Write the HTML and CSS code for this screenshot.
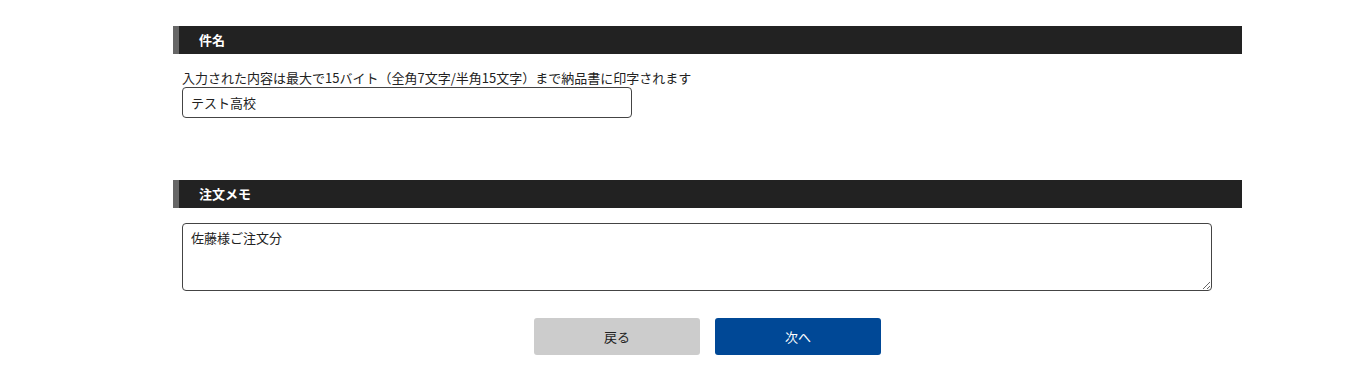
FILE: index.html
```html
<!DOCTYPE html>
<html lang="ja">
<head>
    <meta charset="UTF-8">
    <meta name="viewport" content="width=device-width, initial-scale=1.0">
    <title>注文情報入力</title>
    <link rel="stylesheet" href="styles.css">
</head>
<body>
    <div class="container">
        <div class="section">
            <h2 class="section-title">件名</h2>
            <div class="section-body">
                <p class="note">入力された内容は最大で15バイト（全角7文字/半角15文字）まで納品書に印字されます</p>
                <input type="text" class="subject" value="テスト高校">
            </div>
        </div>

        <div class="section memo">
            <h2 class="section-title">注文メモ</h2>
            <div class="section-body">
                <textarea class="memo-text">佐藤様ご注文分</textarea>
            </div>
        </div>

        <div class="buttons">
            <button class="btn btn-back">戻る</button>
            <button class="btn btn-next">次へ</button>
        </div>
    </div>
</body>
</html>
```

FILE: styles.css
```css
body {
    font-family: "Noto Sans CJK JP", "Noto Sans", sans-serif;
    margin: 0;
    padding: 0;
    background-color: #ffffff;
    color: #222222;
    font-size: 13px;
}

.container {
    width: 1069px;
    margin-left: 173px;
    padding-top: 26px;
}

.section-title {
    margin: 0;
    height: 28px;
    line-height: 28px;
    background-color: #222222;
    border-left: 6px solid #666666;
    padding-left: 20px;
    color: #ffffff;
    font-size: 13px;
    font-weight: bold;
    box-sizing: border-box;
}

.section-body {
    padding-left: 9px;
}

.note {
    margin: 14px 0 0;
    line-height: 19px;
}

.subject {
    display: block;
    width: 450px;
    height: 31px;
    box-sizing: border-box;
    padding: 0 8px;
    border: 1px solid #444444;
    border-radius: 4px;
    font-family: inherit;
    font-size: 13px;
    color: #222222;
}

.memo {
    margin-top: 62px;
}

.memo .section-body {
    padding-top: 15px;
}

.memo-text {
    display: block;
    width: 1030px;
    height: 68px;
    box-sizing: border-box;
    padding: 4px 8px;
    border: 1px solid #444444;
    border-radius: 4px;
    font-family: inherit;
    font-size: 13px;
    color: #222222;
    resize: vertical;
}

.buttons {
    display: flex;
    justify-content: center;
    gap: 15px;
    margin-top: 27px;
}

.btn {
    width: 166px;
    height: 37px;
    border: none;
    border-radius: 3px;
    font-family: inherit;
    font-size: 13px;
    cursor: pointer;
}

.btn-back {
    background-color: #cccccc;
    color: #222222;
}

.btn-next {
    background-color: #004896;
    color: #ffffff;
}
```
